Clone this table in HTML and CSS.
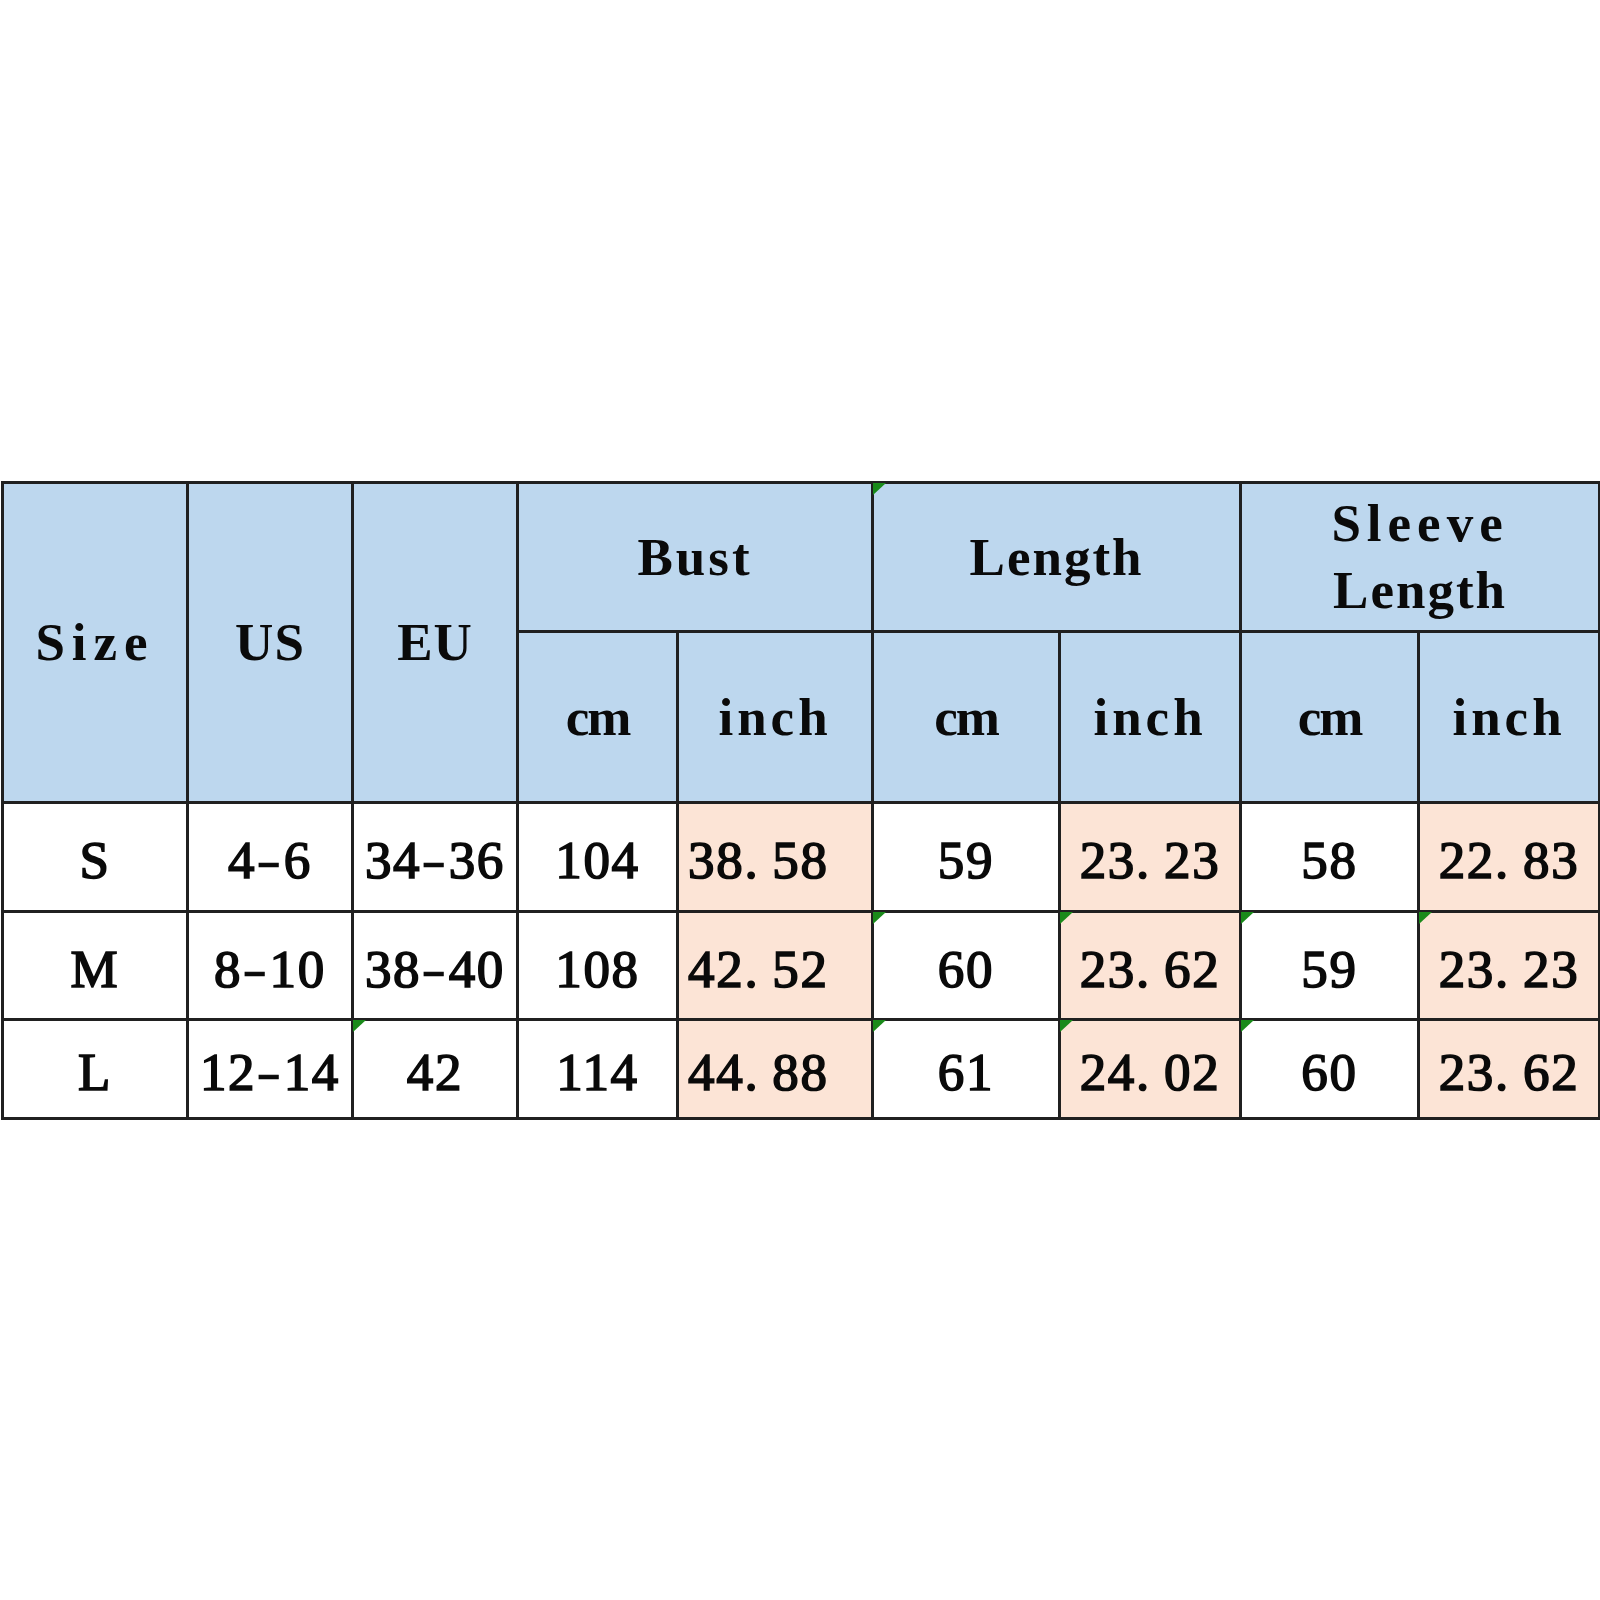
FILE: index.html
```html
<!DOCTYPE html>
<html>
<head>
<meta charset="utf-8">
<link rel="stylesheet" href="styles.css">
</head>
<body>
<table class="chart">
  <colgroup>
    <col class="c-size"><col class="c-us"><col class="c-eu">
    <col class="c-bcm"><col class="c-binch">
    <col class="c-lcm"><col class="c-linch">
    <col class="c-scm"><col class="c-sinch">
  </colgroup>
  <thead>
    <tr class="h1">
      <th rowspan="2" class="ls-size">Size</th>
      <th rowspan="2" class="ls-us">US</th>
      <th rowspan="2" class="ls-us">EU</th>
      <th colspan="2" class="ls-bust">Bust</th>
      <th colspan="2" class="ls-len flag">Length</th>
      <th colspan="2" class="ls-sleeve"><span class="sl-1">Sleeve</span><br><span class="sl-2">Length</span></th>
    </tr>
    <tr class="h2">
      <th class="ls-cm">cm</th>
      <th class="ls-inch">inch</th>
      <th class="ls-cm">cm</th>
      <th class="ls-inch">inch</th>
      <th class="ls-cm">cm</th>
      <th class="ls-inch">inch</th>
    </tr>
  </thead>
  <tbody>
    <tr class="r1">
      <td>S</td>
      <td>4<span class="dash">-</span>6</td>
      <td>34<span class="dash">-</span>36</td>
      <td>104</td>
      <td class="inch left">38<span class="dot">.</span>58</td>
      <td>59</td>
      <td class="inch">23<span class="dot">.</span>23</td>
      <td>58</td>
      <td class="inch">22<span class="dot">.</span>83</td>
    </tr>
    <tr class="r2">
      <td>M</td>
      <td>8<span class="dash">-</span>10</td>
      <td>38<span class="dash">-</span>40</td>
      <td>108</td>
      <td class="inch left">42<span class="dot">.</span>52</td>
      <td class="flag">60</td>
      <td class="inch flag">23<span class="dot">.</span>62</td>
      <td class="flag">59</td>
      <td class="inch flag">23<span class="dot">.</span>23</td>
    </tr>
    <tr class="r3">
      <td>L</td>
      <td>12<span class="dash">-</span>14</td>
      <td class="flag">42</td>
      <td>114</td>
      <td class="inch left">44<span class="dot">.</span>88</td>
      <td class="flag">61</td>
      <td class="inch flag">24<span class="dot">.</span>02</td>
      <td class="flag">60</td>
      <td class="inch">23<span class="dot">.</span>62</td>
    </tr>
  </tbody>
</table>
</body>
</html>
```

FILE: styles.css
```css
html, body {
  margin: 0;
  padding: 0;
  background: #ffffff;
}

body {
  width: 1600px;
  height: 1600px;
  overflow: hidden;
}

.chart {
  margin: 481px 0 0 1px;
  border-collapse: collapse;
  table-layout: fixed;
  width: 1597px;
  font-family: "Liberation Serif", "Times New Roman", serif;
  font-size: 53px;
  color: #0a0a0a;
}

.c-size { width: 185px; }
.c-us { width: 165px; }
.c-eu { width: 165px; }
.c-bcm { width: 160px; }
.c-binch { width: 195px; }
.c-lcm { width: 187px; }
.c-linch { width: 181px; }
.c-scm { width: 178px; }
.c-sinch { width: 181px; }

.chart th,
.chart td {
  border: 3px solid #202020;
  padding: 0;
  text-align: center;
  vertical-align: middle;
  position: relative;
  white-space: nowrap;
}

.chart th {
  background: #bdd7ee;
  font-weight: bold;
  line-height: 67px;
}

.chart td {
  background: #ffffff;
  font-weight: normal;
  -webkit-text-stroke: 1.6px #0a0a0a;
  letter-spacing: 1.7px;
  line-height: 60px;
  padding-top: 6px;
}

.chart td.inch {
  background: #fce4d6;
}

.chart td.left {
  text-align: left;
  padding-left: 9px;
}

.h1 { height: 149px; }
.h2 { height: 171px; }
.r1 { height: 109px; }
.r2 { height: 108px; }
.r3 { height: 99px; }

.ls-size { letter-spacing: 7px; padding-top: 12px; }
.ls-us { letter-spacing: 1px; padding-top: 12px; }
.ls-bust { letter-spacing: 3px; padding-top: 4px; }
.ls-len { letter-spacing: 2px; padding-top: 4px; }
.ls-sleeve { padding-top: 10px; }
.sl-1 { letter-spacing: 6px; }
.sl-2 { letter-spacing: 2px; }
.ls-cm { letter-spacing: -2px; padding-top: 14px; }
.ls-inch { letter-spacing: 4px; padding-top: 12px; }

.dot {
  margin-right: 13px;
}

.dash {
  display: inline-block;
  margin: 0 4px;
  transform: scaleX(1.4);
  -webkit-text-stroke: 0.6px #0a0a0a;
}

.flag::before {
  content: "";
  position: absolute;
  top: -1px;
  left: -1px;
  width: 0;
  height: 0;
  border-top: 12px solid #1a8a1a;
  border-right: 13px solid transparent;
}
```
